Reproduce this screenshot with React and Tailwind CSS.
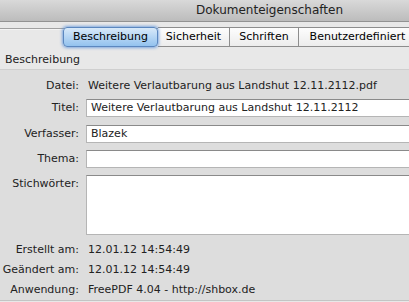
const tabs = [
  { label: 'Beschreibung', width: 'w-[95px]' },
  { label: 'Sicherheit', width: 'w-[72px]' },
  { label: 'Schriften', width: 'w-[69px]' },
  { label: 'Benutzerdefiniert', width: 'w-[118px]' },
];

function Label({ children }) {
  return <div className="w-[80px] shrink-0 text-right pr-[1px]">{children}</div>;
}

function Field({ value, className = '' }) {
  return (
    <div className={`ml-[6px] -mr-[10px] flex-1 h-[18px] bg-white border border-[#b5b5b5] border-t-[#8a8a8a] pl-[4px] leading-[16px] ${className}`}>
      {value}
    </div>
  );
}

export default function App() {
  return (
    <div className="w-[409px] h-[302px] overflow-hidden bg-[#e8e8e8] text-[11px] text-black font-['DejaVu_Sans',sans-serif]">
      <div className="h-[22px] bg-gradient-to-b from-[#d9d9d9] to-[#bcbcbc] border-b border-[#929292] pl-[196px] text-[12px] leading-[21px] text-[#222]">
        Dokumenteigenschaften
      </div>

      <div className="relative h-[28px]">
        <div className="absolute left-0 right-0 top-[6px] border-t border-[#a0a0a0] border-b border-b-[#f4f4f4]" />
        <div className="absolute left-[63px] top-[5px] flex h-[20px]">
          {tabs.map((tab, i) => (
            <div
              key={tab.label}
              className={
                i === 0
                  ? `relative z-10 ${tab.width} text-center leading-[18px] rounded-[4px] border border-[#5b87bf] bg-gradient-to-b from-[#d8e9f9] to-[#93c2ee] shadow-[0_0_3px_1px_rgba(80,140,220,0.7)]`
                  : `${tab.width} shrink-0 text-center leading-[18px] border-y border-r border-[#8d8d8d] bg-gradient-to-b from-[#fdfdfd] to-[#ececec]`
              }
            >
              {tab.label}
            </div>
          ))}
        </div>
      </div>

      <div className="h-[20px] pl-[5px] leading-[20px] text-[#222] border-b border-[#cfcfcf]">Beschreibung</div>

      <div className="bg-[#dddddd] pt-[7px] text-[#222]">
        <div className="flex h-[18px] items-center">
          <Label>Datei:</Label>
          <div className="ml-[8px] whitespace-nowrap">Weitere Verlautbarung aus Landshut 12.11.2112.pdf</div>
        </div>
        <div className="flex mt-[4px] items-center">
          <Label>Titel:</Label>
          <Field value="Weitere Verlautbarung aus Landshut 12.11.2112" />
        </div>
        <div className="flex mt-[8px] items-center">
          <Label>Verfasser:</Label>
          <Field value="Blazek" />
        </div>
        <div className="flex mt-[7px] items-center">
          <Label>Thema:</Label>
          <Field value="" />
        </div>
        <div className="flex mt-[7px]">
          <div className="pt-[1px]">
            <Label>Stichwörter:</Label>
          </div>
          <Field value="" className="h-[60px]" />
        </div>
        <div className="flex mt-[6px] h-[18px] items-center">
          <Label>Erstellt am:</Label>
          <div className="ml-[8px]">12.01.12 14:54:49</div>
        </div>
        <div className="flex mt-[2px] h-[18px] items-center">
          <Label>Geändert am:</Label>
          <div className="ml-[8px]">12.01.12 14:54:49</div>
        </div>
        <div className="flex mt-[2px] h-[18px] items-center">
          <Label>Anwendung:</Label>
          <div className="ml-[8px] whitespace-nowrap">FreePDF 4.04 - http://shbox.de</div>
        </div>
        <div className="mt-[1px] border-t border-[#c4c4c4] h-[4px] bg-[#e8e8e8]" />
      </div>
    </div>
  );
}
